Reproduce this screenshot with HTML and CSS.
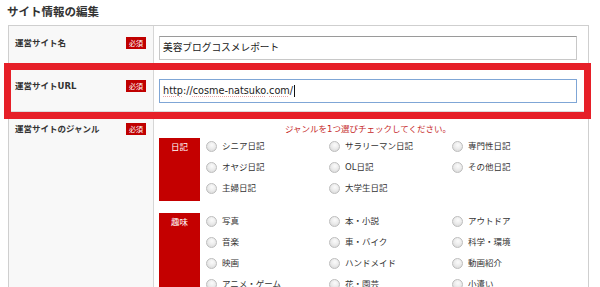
FILE: index.html
```html
<!DOCTYPE html>
<html lang="ja">
<head>
<meta charset="utf-8">
<title>サイト情報の編集</title>
<link rel="stylesheet" href="styles.css">
</head>
<body>
<div class="page">
  <h1 class="title">サイト情報の編集</h1>
  <div class="form">
    <div class="row">
      <div class="label"><span class="label-text">運営サイト名</span><span class="badge">必須</span></div>
      <div class="field"><div class="input">美容ブログコスメレポート</div></div>
    </div>
    <div class="row">
      <div class="label"><span class="label-text">運営サイトURL</span><span class="badge">必須</span></div>
      <div class="field"><div class="input input-focus"><span class="spell">http</span>://<span class="spell">cosme-natsuko</span>.<span class="spell">com</span>/<span class="caret"></span></div></div>
    </div>
    <div class="row">
      <div class="label"><span class="label-text">運営サイトのジャンル</span><span class="badge">必須</span></div>
      <div class="field genre-field">
        <p class="note">ジャンルを1つ選びチェックしてください。</p>
        <div class="group">
          <div class="cat">日記</div>
          <ul class="options">
            <li class="option"><span class="radio"></span><span class="opt-text">シニア日記</span></li>
            <li class="option"><span class="radio"></span><span class="opt-text">サラリーマン日記</span></li>
            <li class="option"><span class="radio"></span><span class="opt-text">専門性日記</span></li>
            <li class="option"><span class="radio"></span><span class="opt-text">オヤジ日記</span></li>
            <li class="option"><span class="radio"></span><span class="opt-text">OL日記</span></li>
            <li class="option"><span class="radio"></span><span class="opt-text">その他日記</span></li>
            <li class="option"><span class="radio"></span><span class="opt-text">主婦日記</span></li>
            <li class="option"><span class="radio"></span><span class="opt-text">大学生日記</span></li>
          </ul>
        </div>
        <div class="group">
          <div class="cat">趣味</div>
          <ul class="options">
            <li class="option"><span class="radio"></span><span class="opt-text">写真</span></li>
            <li class="option"><span class="radio"></span><span class="opt-text">本・小説</span></li>
            <li class="option"><span class="radio"></span><span class="opt-text">アウトドア</span></li>
            <li class="option"><span class="radio"></span><span class="opt-text">音楽</span></li>
            <li class="option"><span class="radio"></span><span class="opt-text">車・バイク</span></li>
            <li class="option"><span class="radio"></span><span class="opt-text">科学・環境</span></li>
            <li class="option"><span class="radio"></span><span class="opt-text">映画</span></li>
            <li class="option"><span class="radio"></span><span class="opt-text">ハンドメイド</span></li>
            <li class="option"><span class="radio"></span><span class="opt-text">動画紹介</span></li>
            <li class="option"><span class="radio"></span><span class="opt-text">アニメ・ゲーム</span></li>
            <li class="option"><span class="radio"></span><span class="opt-text">花・園芸</span></li>
            <li class="option"><span class="radio"></span><span class="opt-text">小遣い</span></li>
          </ul>
        </div>
      </div>
    </div>
  </div>
  <div class="highlight"></div>
</div>
</body>
</html>
```

FILE: styles.css
```css
html, body {
  margin: 0;
  padding: 0;
  background: #fff;
  overflow: hidden;
}
body {
  font-family: "DejaVu Sans", "Noto Sans CJK JP", sans-serif;
  color: #333;
}
.page {
  position: relative;
  padding: 0 11px 0 8px;
}
.title {
  margin: 0;
  padding: 5px 0 6px 0;
  margin-left: -1px;
  font-size: 11.5px;
  line-height: 14px;
  font-weight: bold;
  color: #333;
}
.form {
  border: 1px solid #cfcfcf;
  border-bottom: none;
}
.row {
  display: grid;
  grid-template-columns: 145px 1fr;
  border-bottom: 1px solid #dcdcdc;
}
.label {
  box-sizing: border-box;
  background: #f8f8f8;
  border-right: 1px solid #d6d6d6;
  padding: 11px 7px 0 6px;
  display: flex;
  justify-content: space-between;
  align-items: flex-start;
}
.label-text {
  font-size: 8.5px;
  font-weight: bold;
  line-height: 12px;
  color: #333;
  padding-top: 0;
}
.badge {
  width: 20px;
  height: 12px;
  background: #c00000;
  color: #fff;
  font-size: 7px;
  line-height: 12px;
  text-align: center;
  font-family: "Noto Sans CJK JP", sans-serif;
}
.field {
  padding: 10px 11px 8px 5px;
}
.input {
  box-sizing: border-box;
  height: 24px;
  border: 1px solid #c8c8c8;
  border-top-color: #9a9a9a;
  padding: 0 3px;
  font-size: 9.7px;
  line-height: 22px;
  color: #222;
  white-space: nowrap;
}
.input-focus {
  border-color: #7fa6d6;
}
.spell {
  text-decoration: underline dotted #e9a3a3;
  text-underline-offset: 2px;
}
.caret {
  display: inline-block;
  width: 1px;
  height: 12px;
  background: #111;
  vertical-align: middle;
  margin-left: 1px;
}
.genre-field {
  padding: 10px 11px 0 5px;
}
.note {
  margin: 0 0 2px 0;
  text-align: center;
  font-size: 8.5px;
  line-height: 14px;
  color: #c62a2a;
}
.group {
  display: flex;
  margin-bottom: 12px;
}
.cat {
  flex: 0 0 41px;
  background: #c40000;
  color: #fff;
  text-align: center;
  font-size: 8.5px;
  line-height: 12px;
  padding-top: 3px;
}
.options {
  list-style: none;
  margin: 0 0 0 6px;
  padding: 0;
  display: grid;
  grid-template-columns: 123px 123px 123px;
  grid-auto-rows: 21px;
}
.option {
  display: flex;
  align-items: flex-start;
  padding-top: 2px;
  height: 21px;
  box-sizing: border-box;
}
.radio {
  box-sizing: border-box;
  width: 11px;
  height: 11px;
  border-radius: 50%;
  border: 1px solid #bdbdbd;
  background: radial-gradient(circle at 55% 35%, #fbfbfb 0%, #ececec 45%, #d2d2d2 100%);
  margin-top: 1px;
  flex: 0 0 11px;
}
.opt-text {
  margin-left: 5px;
  font-size: 8.5px;
  line-height: 13px;
  color: #333;
  white-space: nowrap;
}
.highlight {
  position: absolute;
  left: 4px;
  top: 63px;
  width: 587px;
  height: 56px;
  box-sizing: border-box;
  border: 7px solid #e61f28;
}
```
